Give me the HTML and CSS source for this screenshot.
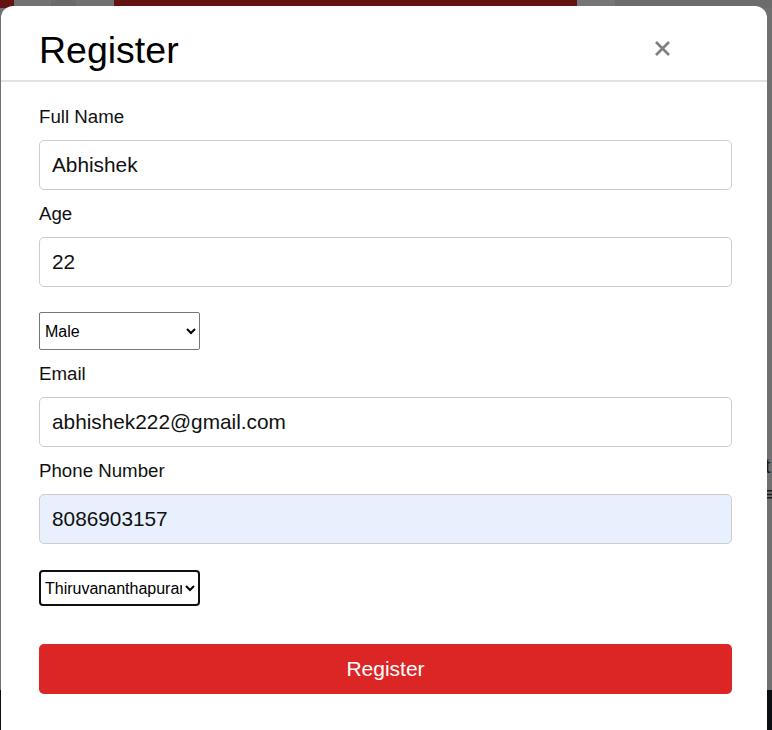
FILE: index.html
```html
<!DOCTYPE html>
<html>
<head>
<meta charset="utf-8">
<link rel="stylesheet" href="styles.css">
</head>
<body>
<div class="backdrop">
  <div class="bd-top">
    <span class="bd-red bd-r1"></span>
    <span class="bd-gray bd-g1"></span>
    <span class="bd-gray bd-g2"></span>
    <span class="bd-gray bd-g3"></span>
    <span class="bd-red bd-r2"></span>
    <span class="bd-gray bd-g4"></span>
    <span class="bd-gray bd-g5"></span>
  </div>
  <div class="bd-peek">t<br>≡</div>
  <div class="bd-bottom"></div>
</div>
<div class="modal">
  <div class="modal-header">
    <h1 class="modal-title">Register</h1>
    <button class="close-btn" aria-label="Close">
      <svg width="17" height="17" viewBox="0 0 17 17"><path d="M2 2 L15 15 M15 2 L2 15" stroke="#808080" stroke-width="2.7" stroke-linecap="butt"/></svg>
    </button>
  </div>
  <form class="modal-body">
    <label class="field-label">Full Name</label>
    <input class="field-input" type="text" value="Abhishek">
    <label class="field-label">Age</label>
    <input class="field-input" type="text" value="22">
    <select class="field-select">
      <option>Male</option>
      <option>Female</option>
    </select>
    <label class="field-label">Email</label>
    <input class="field-input" type="text" value="abhishek222@gmail.com">
    <label class="field-label">Phone Number</label>
    <input class="field-input autofilled" type="text" value="8086903157">
    <select class="field-select focused">
      <option>Thiruvananthapuram</option>
      <option>Kollam</option>
    </select>
    <button type="button" class="submit-btn">Register</button>
  </form>
</div>
</body>
</html>
```
FILE: styles.css
```css
* { box-sizing: border-box; }
html, body {
  margin: 0;
  padding: 0;
  width: 772px;
  height: 730px;
  overflow: hidden;
  background: #707070;
  font-family: "Liberation Sans", Arial, sans-serif;
}
.backdrop {
  position: absolute;
  inset: 0;
}
.bd-top {
  display: flex;
  height: 8px;
}
.bd-red { background: #651213; }
.bd-gray { background: #6e6e6e; }
.bd-r1 { width: 14px; }
.bd-g1 { width: 37px; background: #727272; }
.bd-g2 { width: 25px; background: #6a6a6a; }
.bd-g3 { width: 38px; background: #707070; }
.bd-r2 { width: 463px; }
.bd-g4 { width: 38px; background: #767676; }
.bd-g5 { flex: 1; background: #6c6c6c; }
.bd-peek {
  position: absolute;
  left: 765px;
  top: 452px;
  font-size: 20px;
  line-height: 28px;
  color: #1b1b1b;
}
.bd-bottom {
  position: absolute;
  left: 0;
  right: 0;
  top: 690px;
  bottom: 0;
  background: #0b0e13;
}
.modal {
  position: absolute;
  left: 1px;
  top: 6px;
  width: 766px;
  height: 740px;
  background: #fff;
  border-radius: 12px;
}
.modal-header {
  display: flex;
  align-items: flex-start;
  justify-content: space-between;
  height: 76px;
  padding: 23px 96px 0 38px;
  border-bottom: 2px solid #e2e2e2;
}
.modal-title {
  margin: 0;
  font-size: 37.5px;
  font-weight: normal;
  line-height: 42px;
  color: #000;
}
.close-btn {
  border: 0;
  background: none;
  padding: 0;
  margin-top: 11px;
  width: 17px;
  height: 17px;
  display: flex;
}
.modal-body {
  display: flex;
  flex-direction: column;
  align-items: flex-start;
  padding: 24px 35px 0 38px;
}
.field-label {
  display: block;
  font-size: 18.7px;
  line-height: 21px;
  margin-bottom: 13px;
  color: #111;
}
.field-input {
  width: 693px;
  height: 50px;
  border: 1px solid #cdcdcd;
  border-radius: 5px;
  padding: 0 12px;
  font-family: "Liberation Sans", Arial, sans-serif;
  font-size: 20.8px;
  color: #111;
  background: #fff;
  margin: 0 0 13px 0;
}
.field-input.autofilled {
  background: #e8f0fe;
}
.field-select {
  width: 161px;
  height: 38px;
  margin: 12px 0 13px 0;
  border: 1px solid #767676;
  border-radius: 2px;
  font-family: "Liberation Sans", Arial, sans-serif;
  font-size: 16px;
  color: #000;
  background: #fff;
  padding: 0 1px;
}
.field-select.focused {
  height: 36px;
  margin-top: 13px;
  border: 2px solid #101010;
  border-radius: 4px;
  padding: 0;
}
.submit-btn {
  width: 693px;
  height: 50px;
  margin-top: 25px;
  border: 0;
  border-radius: 5px;
  background: #dc2626;
  color: #fff;
  font-family: "Liberation Sans", Arial, sans-serif;
  font-size: 21px;
}
```
